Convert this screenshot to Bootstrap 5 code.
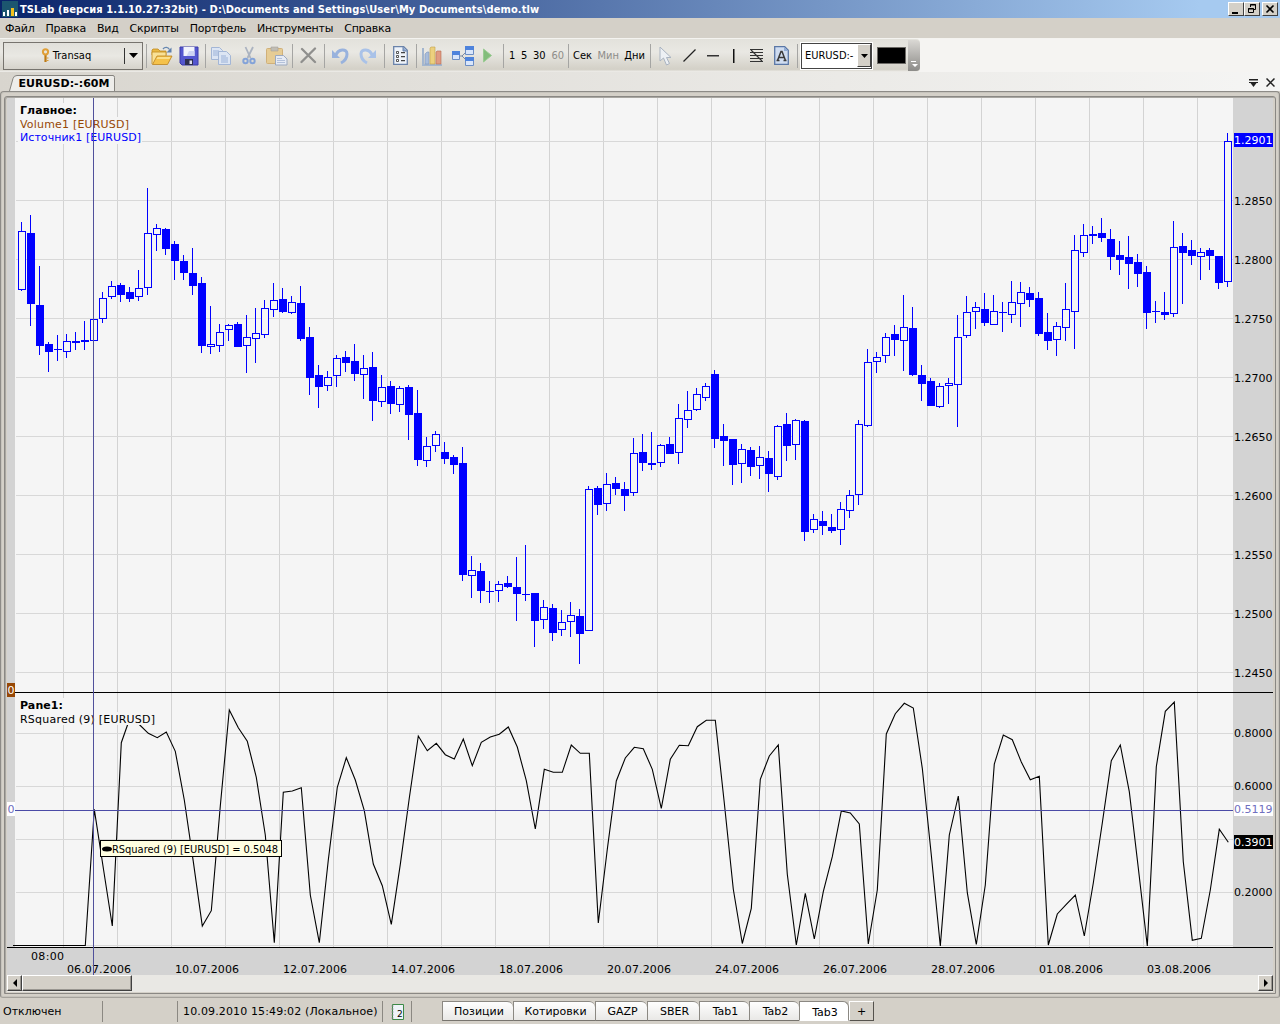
<!DOCTYPE html>
<html lang="ru">
<head>
  <meta charset="UTF-8" />
  <meta name="viewport" content="width=device-width, initial-scale=1" />
  <title>TSLab</title>
  <link href="https://cdn.jsdelivr.net/npm/bootstrap@5.3.2/dist/css/bootstrap.min.css" rel="stylesheet" />
  <style>
    body {
      width: 1280px;
      height: 1024px;
      background: #d4d0c8;
      color: #000;
      font: 11px/13px "DejaVu Sans", sans-serif;
      overflow: hidden;
    }
    .narrow {
      font-family: "DejaVu Sans Condensed", "DejaVu Sans", sans-serif;
    }
    svg {
      display: block;
      flex: none;
    }

    /* title bar */
    .titlebar {
      height: 18px;
      padding: 0 2px;
      background: linear-gradient(to right, #0a246a, #a6caf0 1200px);
    }
    .title-text {
      color: #fff;
      font-weight: bold;
      margin-left: 2px;
      letter-spacing: 0.12px;
    }
    .win-btn {
      width: 16px;
      height: 14px;
      background: #d4d0c8;
      border: 1px solid;
      border-color: #fff #404040 #404040 #fff;
    }
    .win-gap { margin-right: 2px; }
    .menubar {
      height: 21px;
      padding: 1px 0 0 5px;
      gap: 11px;
      letter-spacing: -0.23px;
      border-bottom: 1px solid #f4f3f0;
    }

    /* toolbar */
    .tool-row {
      height: 33px;
      background: #f5f4f2;
    }
    .tool-tray {
      width: 920px;
      height: 33px;
      padding-top: 0;
      background: linear-gradient(#e3e2dc, #e9e8e3 40%, #d3d0c7 92%, #f0efec);
      border-radius: 0 4px 4px 0;
    }
    .account-box {
      width: 140px;
      height: 28px;
      margin: 0 3px 0 3px;
      border: 1px solid #77746e;
      background: linear-gradient(#e1e0da, #e9e8e3 50%, #d6d3cb);
    }
    .account-name {
      width: 120px;
      padding-left: 4px;
      gap: 3px;
    }
    .account-arrow {
      height: 16px;
      border-left: 1px solid #333;
      width: 18px;
    }
    .tool-group {
      height: 24px;
      border-left: 1px solid #a5a5a3;
    }
    .g-file { width: 59px; padding: 0 6px 0 4px; }
    .g-edit { width: 87px; padding: 0 4px 0 5px; }
    .g-del { width: 32px; }
    .g-undo { width: 60px; padding: 0 8px 0 7px; }
    .g-prop { width: 32px; }
    .g-run { width: 87px; padding: 0 11px 0 5px; }
    .g-num { width: 65px; padding: 0 4px 0 5px; }
    .g-unit { width: 82px; padding: 0 5px 0 4px; }
    .g-draw { width: 147px; padding: 0 8px 0 8px; }
    .g-pick { padding-left: 2px; gap: 4px; }
    .dim { color: #8e8d89; }
    .symbol-box {
      width: 73px;
      height: 28px;
      background: #fff;
      border: 1px solid #fff;
      outline: 1px solid #444;
      outline-offset: -2px;
      padding: 1px;
    }
    .symbol-name { padding-left: 3px; }
    .symbol-arrow {
      width: 14px;
      height: 23px;
      background: #d4d0c8;
      border: 1px solid;
      border-color: #fff #404040 #404040 #fff;
    }
    .color-box {
      width: 29px;
      height: 17px;
      background: #000;
      border: 1px solid #6c6a66;
    }
    .overflow-grip {
      width: 12px;
      height: 31px;
      margin-left: auto;
      border-radius: 0 4px 4px 0;
      background: linear-gradient(#dad8d4, #8c8b88);
    }

    /* document tab row */
    .doc-row {
      height: 19px;
      padding: 0 5px 0 9px;
      background: linear-gradient(to right, #d8d5ce, #f5f5f4);
    }
    .doc-tab {
      width: 107px;
      height: 18px;
    }
    .doc-icons { gap: 8px; padding-top: 2px; }

    /* chart frame */
    .frame-outer {
      height: 907px;
      padding: 4px 3px 0 3px;
      border: 1px solid #8d8b87;
      border-bottom-color: #a5a29c;
      border-radius: 4px 4px 3px 3px;
      box-shadow: inset 0 0 0 1px #c6c3bc;
    }
    .frame-inner {
      height: 898px;
      padding: 1px 2px 0 2px;
      border: 1px solid #8a8884;
      border-radius: 3px 3px 0 0;
      box-shadow: inset 1px 1px 0 #a9a7a2;
    }
    .chart-text { font: 11px "DejaVu Sans", sans-serif; }
    .chart-bold { font-weight: bold; }
    .scroll-row {
      height: 17px;
      background: #e9e8e4;
    }
    .scroll-btn, .scroll-thumb {
      height: 16px;
      background: #d4d0c8;
      border: 1px solid;
      border-color: #fff #404040 #404040 #fff;
      box-shadow: inset -1px -1px 0 #9a9791;
    }
    .scroll-btn { width: 15px; }
    .scroll-thumb { width: 110px; }

    /* status bar */
    .status-row {
      height: 26px;
      padding-top: 3px;
    }
    .status-cell {
      height: 21px;
      border-right: 1px solid #8b8882;
    }
    .c-conn { width: 103px; padding-left: 3px; }
    .c-empty { width: 75px; }
    .c-time { width: 205px; padding-left: 5px; letter-spacing: 0.13px; }
    .c-cal { width: 29px; }
    .sheet-tabs { margin-left: 30px; }
    .sheet {
      height: 20px;
      padding: 3px 0 0 2px;
      border: 1px solid #8b8882;
      border-right-width: 0;
      border-bottom-color: #77746e;
      background: linear-gradient(#fefefe, #e9e8e6);
      border-radius: 0 6px 0 0;
    }
    .s72 { width: 71px; }
    .s82 { width: 82px; }
    .s52 { width: 52px; }
    .s50 { width: 50px; }
    .sheet-on {
      background: #fff;
      border-right-width: 1px;
      border-bottom-color: #fff;
      width: 50px;
      padding-top: 4px;
    }
    .sheet-add {
      width: 25px;
      height: 20px;
      background: #d4d0c8;
      border: 1px solid;
      border-color: #fff #55524d #55524d #fff;
    }
  </style>
</head>
<body>

  <!-- Title bar -->
  <div class="titlebar d-flex align-items-center">
    <svg width="16" height="16" viewBox="0 0 16 16"><path fill="#1c566f" d="M0 0h16v16H0z"/><path fill="#fff" d="M1 11h2v4H1zM5 9h2v6H5zM13 11h2v4h-2z"/><path fill="#f3c21c" d="M9 7h3v8H9z"/></svg>
    <span class="title-text narrow text-nowrap">TSLab (версия 1.1.10.27:32bit) - D:\Documents and Settings\User\My Documents\demo.tlw</span>
    <div class="d-flex ms-auto">
      <div class="win-btn"><svg width="14" height="12"><path d="M3 9h6v2H3z"/></svg></div>
      <div class="win-btn win-gap"><svg width="14" height="12" fill="none" stroke="#000"><path d="M5.500 4V1.500h5v5H9M5 2h6M3.500 5.500h5v4h-5zM3 6h6"/></svg></div>
      <div class="win-btn"><svg width="14" height="12"><path d="M3.500 2.500l7 7M10.500 2.500l-7 7" stroke="#000" stroke-width="1.600"/></svg></div>
    </div>
  </div>

  <!-- Menu -->
  <div class="menubar d-flex align-items-center">
    <span>Файл</span><span>Правка</span><span>Вид</span><span>Скрипты</span><span>Портфель</span><span>Инструменты</span><span>Справка</span>
  </div>

  <!-- Toolbar -->
  <div class="tool-row">
    <div class="tool-tray d-flex align-items-center narrow">
      <div class="account-box d-flex align-items-center">
        <div class="account-name d-flex align-items-center justify-content-center">
          <svg width="9" height="15" viewBox="0 0 9 15"><path d="M4.500 6v8" stroke="#bd7a16" stroke-width="2.200"/><circle cx="4.500" cy="3.800" r="2.600" fill="none" stroke="#e0a03a" stroke-width="2"/><path d="M5.500 10h2M5.500 12.500h2" stroke="#d99a34"/></svg>
          <span>Transaq</span>
        </div>
        <div class="account-arrow d-flex align-items-center justify-content-center"><svg width="9" height="5"><path d="M0 0h9L4.500 5z"/></svg></div>
      </div>

      <div class="tool-group g-file d-flex align-items-center justify-content-between">
        <svg width="22" height="20" viewBox="0 0 22 20"><path d="M1 4l1-1h5l2 2h6v4H1z" fill="#e9b945" stroke="#c08a20" stroke-width=".8"/><path d="M1 18V6h14v4" fill="#f9e196" stroke="#c08a20" stroke-width=".8"/><path d="M1.500 18.500L6 10h15l-4.500 8.500z" fill="#f5c24a" stroke="#bb8320" stroke-width=".8"/><path d="M6.500 11h13l-1 2H5.500z" fill="#fbe08c"/><path d="M12 3c2-2.500 5-2 6.500.5" fill="none" stroke="#6687b0" stroke-width="1.300"/><path d="M20.500 1.500v5h-5z" fill="#5e80ac"/></svg>
        <svg width="20" height="20" viewBox="0 0 20 20"><path d="M1 1h18v18H3l-2-2z" fill="#5457cf" stroke="#3b3ba8"/><path d="M4.500 1h11v9h-11z" fill="#f1f3fc"/><path d="M10 5h5.500v5h-8z" fill="#ced4f3"/><path d="M6 13h8v6H6z" fill="#2e3050"/><path d="M10.500 14.500h2.500V18h-2.500z" fill="#dde"/></svg>
      </div>
      <div class="tool-group g-edit d-flex align-items-center justify-content-between">
        <svg width="20" height="19" viewBox="0 0 20 19" stroke="#a3b6d6"><path d="M.5 1.500h8l3 3v9H.5z" fill="#dce5f3"/><path d="M7.500 5.500h8l4 4v9h-12z" fill="#dce5f3"/><path d="M2 5h6M2 7h5M2 9h5M10 10h5M10 12h7M10 14h7M10 16h7" stroke="#9ab1d8"/></svg>
        <svg width="14" height="19" viewBox="0 0 14 19" fill="none"><path d="M3.500 1l5 11M11 1L5.500 12" stroke="#abb3c0" stroke-width="1.800"/><circle cx="3.500" cy="15" r="2.200" stroke="#84a3d8" stroke-width="2"/><circle cx="10.500" cy="15" r="2.200" stroke="#84a3d8" stroke-width="2"/></svg>
        <svg width="22" height="20" viewBox="0 0 22 20"><rect x=".5" y="2.500" width="16" height="15" rx="1" fill="#e6cc94" stroke="#d0b079"/><path d="M5 1h7v4H5z" fill="#c0bdb4" stroke="#a5a29a" stroke-width=".6"/><path d="M9.500 9.500h8l3.500 3.500v6H9.500z" fill="#e6ebf4" stroke="#9ca9bf"/><path d="M11 12.500h5M11 14.500h8M11 16.500h8" stroke="#b3c1da"/></svg>
      </div>
      <div class="tool-group g-del d-flex align-items-center justify-content-center">
        <svg width="17" height="17" viewBox="0 0 17 17"><path d="M2 2l13 13M15 1.500L1.500 15" stroke="#8f8f8d" stroke-width="2.300" stroke-linecap="round"/></svg>
      </div>
      <div class="tool-group g-undo d-flex align-items-center justify-content-between">
        <svg width="17" height="18" viewBox="0 0 17 18"><path d="M4 8c2-6 11-7 11-1 0 4-2 7-6 9" fill="none" stroke="#98b2dd" stroke-width="3"/><path d="M0 3v8h8z" fill="#98b2dd"/></svg>
        <svg width="17" height="18" viewBox="0 0 17 18"><path d="M13 8C11 2 2 1 2 7c0 4 2 7 6 9" fill="none" stroke="#a9c2e8" stroke-width="3"/><path d="M17 3v8H9z" fill="#a9c2e8"/></svg>
      </div>
      <div class="tool-group g-prop d-flex align-items-center justify-content-center">
        <svg width="15" height="19" viewBox="0 0 15 19"><path d="M.7.7h10l3.600 3.600v14H.7z" fill="#eef3fa" stroke="#6a83aa" stroke-width="1.300"/><path d="M10 1v4h4" fill="#8fabd4" stroke="#6a83aa"/><path d="M3.500 5.500h2v2h-2zM3.500 9.500h2v2h-2zM3.500 13.500h2v2h-2z" fill="#fff" stroke="#444" stroke-width=".9"/><path d="M8 6h4v1.200H8zM8 10h4v1.200H8zM8 14h4v1.200H8z" fill="#444"/></svg>
      </div>
      <div class="tool-group g-run d-flex align-items-center justify-content-between">
        <svg width="21" height="20" viewBox="0 0 21 20"><path d="M1 2v17h19" fill="none" stroke="#a3b6cf" stroke-width="2"/><path d="M3 8l2-2h2v12H3z" fill="#a9bddb" stroke="#8299be" stroke-width=".6"/><path d="M8 2l1-1h4v17H8z" fill="#ecd07e" stroke="#c5a14c" stroke-width=".6"/><path d="M14 6l1-1h4v13h-5z" fill="#e09a82" stroke="#bb6b53" stroke-width=".6"/></svg>
        <svg width="22" height="20" viewBox="0 0 22 20"><path d="M7 10h3l5-5M10 10l5 5" fill="none" stroke="#7c8ba2"/><path d="M.5 5.500h7v8h-7zM13.500.5h8v8h-8zM13.500 11.500h8v8h-8z" fill="#d9e6fb" stroke="#6d8ec4"/><path d="M0 5h8v4H0zM13 0h9v4h-9zM13 11h9v4h-9z" fill="#4e83dc"/></svg>
        <svg width="9" height="15" viewBox="0 0 9 15"><path d="M.5 1v13L8.500 7.500z" fill="#83bd7b" stroke="#9acb93"/></svg>
      </div>
      <div class="tool-group g-num d-flex align-items-center justify-content-between">
        <span>1</span><span>5</span><span>30</span><span class="dim">60</span>
      </div>
      <div class="tool-group g-unit d-flex align-items-center justify-content-between">
        <span>Сек</span><span class="dim">Мин</span><span>Дни</span>
      </div>
      <div class="tool-group g-draw d-flex align-items-center justify-content-between">
        <svg width="13" height="20" viewBox="0 0 13 20"><path d="M1 1v14l3.500-3 3 7 3-1.500-3-6H12z" fill="#edf0f4" stroke="#a9b3c1"/></svg>
        <svg width="13" height="13"><path d="M.5 12.500L12.500.5" stroke="#222" stroke-width="1.200"/></svg>
        <svg width="12" height="2"><path d="M0 0h12v1.500H0z" fill="#333"/></svg>
        <svg class="mx-1" width="2" height="14"><path d="M0 0h1.500v14H0z" fill="#111"/></svg>
        <svg width="13" height="14" viewBox="0 0 13 14"><path d="M0 .5h13M0 3.500h13M0 6.500h13M0 9.500h13M0 12.500h13M1 1l11 11" stroke="#333" stroke-width="1.200"/></svg>
        <svg width="15" height="19" viewBox="0 0 15 19"><path d="M.7.700h10l3.600 3.600v14H.7z" fill="#cfdcf0" stroke="#5a77a6" stroke-width="1.300"/><path d="M10 1v4h4" fill="#8fabd4"/><path d="M3.500 14.500l3.500-9h1l3.500 9M5 11.500h5M2.500 14.500h3M9.500 14.500h3" fill="none" stroke="#3a3a3a" stroke-width="1.500"/></svg>
      </div>
      <div class="tool-group g-pick d-flex align-items-center">
        <div class="symbol-box d-flex align-items-center justify-content-between">
          <span class="symbol-name">EURUSD:-</span>
          <div class="symbol-arrow d-flex align-items-center justify-content-center"><svg width="7" height="4"><path d="M0 0h7L3.500 4z"/></svg></div>
        </div>
        <div class="color-box"></div>
      </div>
      <div class="overflow-grip d-flex align-items-end justify-content-center"><svg class="mb-1" width="8" height="6"><path d="M1 0h5v1H1zM2 3h6L5 6z" fill="#fff"/></svg></div>
    </div>
  </div>

  <!-- Document tab -->
  <div class="doc-row d-flex justify-content-between align-items-center">
    <svg class="doc-tab align-self-end" viewBox="0 0 107 18">
      <path d="M.5 18L4 5.500Q4.800 2.500 8 2.500h96q1.500 0 1.500 2V18" fill="#eeedea" stroke="#85837e"/>
      <text x="9.500" y="14" font-size="11" font-weight="bold" textLength="91">EURUSD:-:60M</text>
    </svg>
    <div class="doc-icons d-flex align-items-center">
      <svg width="9" height="8"><path d="M0 0h9v1.500H0zM0 3h9v1H7.500L4.500 8l-3-4H0z" fill="#222"/></svg>
      <svg width="9" height="9"><path d="M.5.500l8 8M8.500.5l-8 8" stroke="#222" stroke-width="1.500"/></svg>
    </div>
  </div>

  <!-- Chart -->
  <div class="frame-outer">
    <div class="frame-inner">
      <svg id="chart" class="chart-text" width="1266" height="877" viewBox="7 98 1266 877"></svg>
      <div class="scroll-row d-flex">
        <div class="scroll-btn d-flex align-items-center justify-content-center"><svg width="4" height="8"><path d="M4 0v8L0 4z"/></svg></div>
        <div class="scroll-thumb"></div>
        <div class="scroll-btn ms-auto d-flex align-items-center justify-content-center"><svg width="4" height="8"><path d="M0 0v8l4-4z"/></svg></div>
      </div>
    </div>
  </div>

  <!-- Status bar -->
  <div class="status-row d-flex">
    <div class="status-cell c-conn d-flex align-items-center">Отключен</div>
    <div class="status-cell c-empty"></div>
    <div class="status-cell c-time d-flex align-items-center text-nowrap">10.09.2010 15:49:02 (Локальное)</div>
    <div class="status-cell c-cal d-flex align-items-center justify-content-center">
      <svg width="13" height="16" viewBox="0 0 13 16"><path d="M1.500.5h11v15h-11z" fill="#eef3f8" stroke="#3c8a46"/><path d="M.5 2h2M.5 5h2M.5 8h2M.5 11h2M.5 14h2" stroke="#888"/><text x="6" y="13" font-size="9">2</text></svg>
    </div>
    <div class="sheet-tabs d-flex">
      <div class="sheet s72 text-center">Позиции</div>
      <div class="sheet s82 text-center">Котировки</div>
      <div class="sheet s52 text-center">GAZP</div>
      <div class="sheet s52 text-center">SBER</div>
      <div class="sheet s50 text-center">Tab1</div>
      <div class="sheet s50 text-center">Tab2</div>
      <div class="sheet sheet-on text-center">Tab3</div>
      <div class="sheet-add d-flex align-items-center justify-content-center">+</div>
    </div>
  </div>

  <script src="https://cdn.jsdelivr.net/npm/bootstrap@5.3.2/dist/js/bootstrap.bundle.min.js"></script>
  <script>
    // high, body top, body bottom, low, 1 = falling bar (filled)
    const bars = [
      [222,231,290,291,0],[215,233,304,326,1],[266,305,346,355,1],[342,344,352,372,1],[335,349,350,361,1],
      [334,341,352,358,0],[332,341,343,350,1],[321,340,342,350,1],[281,319,341,348,0],[292,298,319,323,0],
      [281,286,297,299,0],[283,285,295,302,1],[287,292,299,302,1],[270,288,297,301,0],[188,233,288,295,0],
      [224,228,235,251,0],[228,229,249,255,1],[241,244,261,280,1],[255,261,273,280,1],[248,273,286,295,1],
      [277,283,346,353,1],[306,344,347,354,0],[324,332,346,352,0],[324,325,330,341,0],[322,324,347,347,1],
      [315,337,346,373,0],[308,333,339,363,0],[300,308,335,338,0],[283,300,310,317,0],[288,299,312,313,1],
      [296,302,313,314,0],[286,303,339,341,1],[327,337,378,395,1],[365,375,387,408,1],[371,377,386,391,0],
      [355,358,376,387,0],[351,357,363,372,1],[344,361,374,381,1],[355,368,375,399,0],[352,367,401,421,1],
      [375,387,402,407,0],[381,386,404,414,1],[386,388,405,412,0],[385,387,415,440,1],[390,413,460,466,1],
      [437,446,461,467,0],[431,434,446,452,0],[442,452,459,464,1],[455,457,465,474,1],[447,463,575,581,1],
      [556,570,576,598,0],[563,571,591,603,1],[581,591,592,603,1],[581,584,591,602,0],[576,583,587,588,1],
      [557,587,594,621,1],[545,594,595,601,1],[593,593,621,647,1],[600,607,620,629,0],[604,608,633,641,1],
      [610,622,630,636,0],[602,615,622,637,0],[609,616,634,664,1],[486,489,631,631,0],[486,488,505,515,1],
      [473,484,504,511,0],[477,483,489,495,1],[482,489,496,511,1],[438,453,493,496,0],[434,452,463,471,1],
      [432,463,465,470,1],[444,445,463,467,0],[437,444,454,454,1],[404,418,453,464,0],[391,410,420,428,0],
      [388,394,410,411,0],[383,386,398,401,0],[370,374,439,448,1],[424,436,441,466,1],[439,439,465,485,1],
      [444,449,464,483,0],[447,450,467,476,1],[446,457,466,479,0],[451,458,474,492,1],[425,426,477,480,0],
      [413,424,446,461,1],[419,420,445,460,0],[420,421,532,541,1],[514,519,530,533,0],[511,521,526,535,1],
      [514,527,531,533,1],[502,509,530,545,0],[490,495,511,518,0],[420,424,495,505,0],[349,362,426,427,0],
      [352,357,362,373,0],[333,337,356,363,0],[325,334,340,356,1],[295,327,341,371,0],[307,328,375,376,1],
      [365,375,384,401,1],[378,381,406,406,1],[383,386,407,408,0],[378,383,386,404,0],[315,337,385,427,0],
      [296,312,336,338,0],[302,307,312,329,0],[293,309,323,326,1],[295,311,325,325,0],[302,312,313,332,1],
      [281,302,315,323,0],[282,292,304,327,0],[287,293,300,307,1],[292,298,334,336,1],[313,332,341,350,1],
      [322,326,340,356,0],[283,309,328,341,0],[235,250,312,349,0],[224,235,253,257,0],[226,234,236,244,1],
      [218,233,238,242,1],[229,239,257,270,1],[241,255,260,275,1],[236,257,264,289,1],[254,262,274,287,1],
      [266,272,313,329,1],[301,311,312,323,1],[292,312,315,320,1],[221,247,314,317,0],[233,246,253,304,1],
      [240,250,256,265,1],[248,252,257,280,0],[248,250,256,270,1],[256,256,283,289,1],[133,141,282,287,0]
    ];

    // RSquared (9), one point for each bar
    const rsq = [
      945.5,945.5,945.5,945.5,945.5,945.5,945.5,945.5,809.3,868,926,742.7,717,724.5,733.3,737.7,732,751.3,800,861.7,
      926,910.7,806,710,727.7,741.3,777.3,835,942.7,792.3,791,787.7,895,942.7,860,787.3,757.7,780,810.7,864,
      885.7,924.3,864.3,798,736,750.7,743.3,754.7,759,739,765.7,742.3,737,734.3,727,747,780.7,829,769.3,772.3,
      772.3,745,753.3,753.3,923,849.3,781,758,747.3,748.7,769.3,808.3,759.3,745.3,745.7,726.7,720.3,720.3,803,889.3,
      943.5,908.3,779.3,756,745,874.3,945,893.3,939,891.7,856.7,811,813,824,944,890,734,713.7,703.3,708,
      768.3,855,946,835,796,892.7,944.5,885,764,735,739.7,762,779.7,776.3,945,914,904.3,895,936,883,
      823,760.7,745,791.7,868,946,766.7,711.3,702,861.7,940.3,938.3,890,829.3,842.3
    ];

    const rect = (x, y, w, h, fill) => `<rect x="${x}" y="${y}" width="${w}" height="${h}" fill="${fill}"/>`;
    const text = (x, y, w, s, fill = "#000", cls = "") =>
      `<text x="${x}" y="${y}" textLength="${w}" fill="${fill}" class="${cls}">${s}</text>`;

    function drawBackground() {
      let out = rect(7, 98, 1266, 877, "#d3d3d3") + rect(15, 98, 1218, 849, "#f5f5f5");
      for (let x = 63; x < 1233; x += 54) out += rect(x, 98, 1, 849, "#d3d3d3");
      for (let y = 141; y < 690; y += 59) out += rect(16, y, 1217, 1, "#d8d8d8");
      for (let y = 733; y < 947; y += 53) out += rect(16, y, 1217, 1, "#d8d8d8");
      return out;
    }

    function drawBars() {
      return bars.map(([high, top, bottom, low, down], i) => {
        const x = 18 + 9 * i;
        let out = rect(x + 3, high, 1, low - high, "#00f");
        if (down) {
          out += rect(x, top, 8, bottom - top, "#00f");
        } else {
          out += `<rect x="${x + .5}" y="${top + .5}" width="7" height="${bottom - top - 1}" fill="#f5f5f5" stroke="#00f"/>`;
        }
        return out;
      }).join("");
    }

    function drawLine() {
      const pts = rsq.map((y, i) => `${(22.3 + 9 * i).toFixed(1)},${y}`).join(" ");
      return `<polyline points="13,945.500 ${pts}" fill="none" stroke="#000" stroke-width="1.100"/>`;
    }

    function drawLabels() {
      let out = rect(18, 103, 62, 14, "#f5f5f5") + rect(18, 117, 112, 13, "#f5f5f5") + rect(18, 130, 124, 14, "#f5f5f5");
      out += text(20, 114, 57, "Главное:", "#000", "chart-bold");
      out += text(20, 128, 109, "Volume1 [EURUSD]", "#974806");
      out += text(20, 141, 121, "Источник1 [EURUSD]", "#00f");
      out += rect(18, 698, 46, 14, "#f5f5f5") + rect(18, 712, 139, 13, "#f5f5f5");
      out += text(20, 709, 43, "Pane1:", "#000", "chart-bold");
      out += text(20, 723, 135, "RSquared (9) [EURUSD]");
      return out;
    }

    function drawAxes() {
      let out = rect(7, 692, 1266, 1, "#000") + rect(7, 947, 1266, 1, "#000");
      ["1.2850", "1.2800", "1.2750", "1.2700", "1.2650", "1.2600", "1.2550", "1.2500", "1.2450"].forEach((s, i) => {
        out += text(1234, 205 + 59 * i, 38.5, s);
      });
      out += text(1234, 737, 38.5, "0.8000") + text(1234, 790, 38.5, "0.6000") + text(1234, 896, 38.5, "0.2000");
      out += text(31, 960, 33, "08:00");
      ["06.07", "10.07", "12.07", "14.07", "18.07", "20.07", "24.07", "26.07", "28.07", "01.08", "03.08"].forEach((s, i) => {
        out += text(67 + 108 * i, 973, 64, s + ".2006");
      });
      return out;
    }

    function drawCursor() {
      let out = rect(93, 98, 1, 877, "#50509b") + rect(15, 810, 1218, 1, "#4a4aa6");
      out += rect(1234, 133, 39, 14, "#00f") + text(1234, 144, 38.5, "1.2901", "#fff");
      out += rect(1234, 802, 39, 14, "#fff") + text(1234, 813, 38.5, "0.5119", "#7070c0");
      out += rect(1234, 835, 39, 14, "#000") + text(1234, 846, 38.5, "0.3901", "#fff");
      out += rect(7, 683, 8, 14, "#974806") + text(7.5, 694, 7, "0", "#fff");
      out += rect(7, 802, 8, 14, "#fff") + text(7.5, 813, 7, "0", "#7070c0");
      out += `<rect x="100.500" y="840.500" width="181" height="16" fill="#ffffe1" stroke="#000"/>`;
      out += `<ellipse cx="107" cy="849" rx="5" ry="2.500"/>` + text(112, 853, 166, "RSquared (9) [EURUSD] = 0.5048", "#000", "narrow");
      return out;
    }

    document.getElementById("chart").innerHTML =
      drawBackground() + drawBars() + drawLine() + drawLabels() + drawAxes() + drawCursor();
  </script>
</body>
</html>
